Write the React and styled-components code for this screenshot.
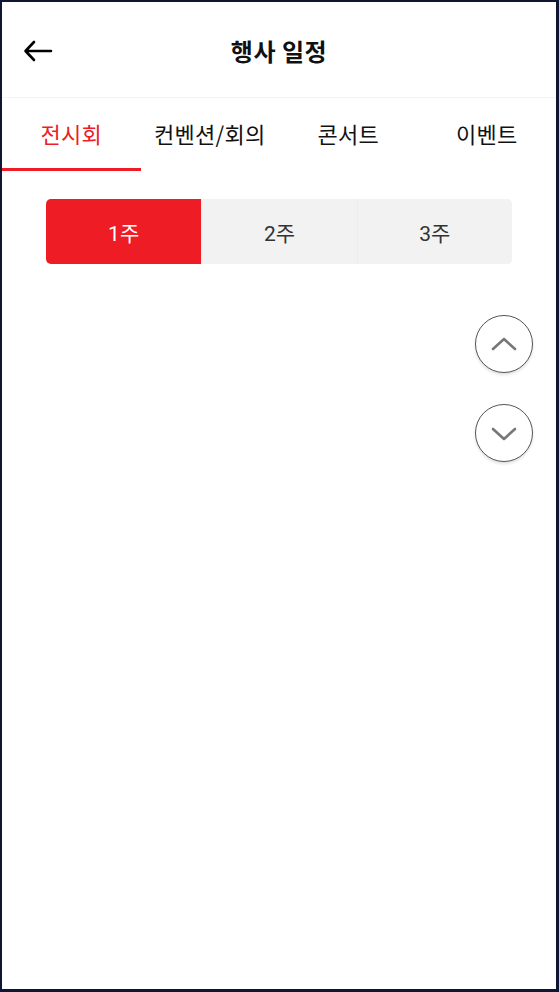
import React, { useState } from 'react';
import styled, { createGlobalStyle } from 'styled-components';

const GlobalStyle = createGlobalStyle`
  html, body {
    margin: 0;
    padding: 0;
    background: #0f1533;
  }
  body {
    font-family: "Noto Sans CJK KR", "Noto Sans", sans-serif;
  }
`;

const Screen = styled.div`
  position: relative;
  margin: 2px 3px 0 2px;
  height: 987px;
  background: #fff;
  overflow: hidden;
`;

const Header = styled.header`
  position: relative;
  height: 95px;
  display: flex;
  align-items: center;
  justify-content: center;
  border-bottom: 1px solid #f3f3f3;
`;

const BackButton = styled.button`
  position: absolute;
  left: 19px;
  top: 34px;
  width: 34px;
  height: 30px;
  padding: 0;
  border: 0;
  background: none;
  display: flex;
  align-items: center;
  justify-content: center;
`;

const Title = styled.h1`
  margin: 0 0 -2px;
  font-size: 24px;
  font-weight: 700;
  color: #111;
  letter-spacing: 0.5px;
`;

const Tabs = styled.nav`
  display: grid;
  grid-template-columns: repeat(4, 1fr);
  height: 73px;
`;

const Tab = styled.button`
  border: 0;
  background: none;
  padding: 0;
  font-family: inherit;
  font-size: 22px;
  letter-spacing: 0.3px;
  color: ${p => (p.$active ? '#ee1c25' : '#111')};
  border-bottom: 3px solid ${p => (p.$active ? '#ee1c25' : 'transparent')};
`;

const Segments = styled.div`
  margin: 28px 44px 0 44px;
  display: grid;
  grid-template-columns: repeat(3, 1fr);
  height: 65px;
  border-radius: 5px;
  overflow: hidden;
  background: #f2f2f2;
`;

const Segment = styled.button`
  border: 0;
  padding: 0;
  font-family: "Roboto", "Noto Sans CJK KR", sans-serif;
  font-size: 21px;
  background: ${p => (p.$active ? '#ee1c25' : '#f2f2f2')};
  color: ${p => (p.$active ? '#fff' : '#333')};
  & + & {
    border-left: 1px solid ${p => (p.$active ? '#ee1c25' : '#ececec')};
  }
`;

const ScrollButton = styled.button`
  position: absolute;
  right: 23px;
  top: ${p => p.$top}px;
  width: 58px;
  height: 58px;
  border-radius: 50%;
  border: 1px solid #555;
  background: #fff;
  box-shadow: 0 2px 3px rgba(0, 0, 0, 0.12);
  display: flex;
  align-items: center;
  justify-content: center;
  padding: 0;
`;

const Chevron = ({ up }) => (
  <svg width="28" height="28" viewBox="0 0 28 28" fill="none">
    <path
      d={up ? 'M3 19 L14 9 L25 19' : 'M3 10 L14 20 L25 10'}
      stroke="#777"
      strokeWidth="2.6"
      strokeLinecap="round"
      strokeLinejoin="round"
    />
  </svg>
);

const tabs = ['전시회', '컨벤션/회의', '콘서트', '이벤트'];
const weeks = ['1주', '2주', '3주'];

export default function App() {
  const [tab, setTab] = useState(0);
  const [week, setWeek] = useState(0);

  return (
    <>
      <GlobalStyle />
      <Screen>
        <Header>
          <BackButton aria-label="back">
            <svg width="30" height="22" viewBox="0 0 30 22" fill="none">
              <path d="M28 11 H3 M11 2 L2.5 11 L11 20" stroke="#000" strokeWidth="2.6" strokeLinecap="round" strokeLinejoin="round" />
            </svg>
          </BackButton>
          <Title>행사 일정</Title>
        </Header>
        <Tabs>
          {tabs.map((t, i) => (
            <Tab key={t} $active={i === tab} onClick={() => setTab(i)}>{t}</Tab>
          ))}
        </Tabs>
        <Segments>
          {weeks.map((w, i) => (
            <Segment key={w} $active={i === week} onClick={() => setWeek(i)}>{w}</Segment>
          ))}
        </Segments>
        <ScrollButton $top={313} aria-label="up"><Chevron up /></ScrollButton>
        <ScrollButton $top={402} aria-label="down"><Chevron /></ScrollButton>
      </Screen>
    </>
  );
}
